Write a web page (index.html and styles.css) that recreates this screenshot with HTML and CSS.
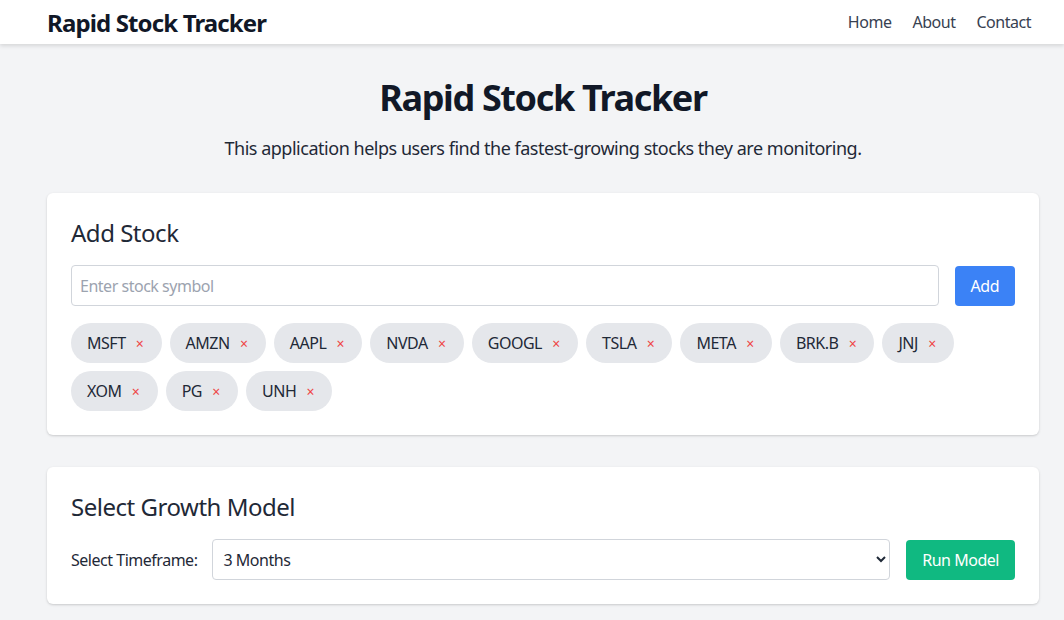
FILE: index.html
```html
<!DOCTYPE html>
<html lang="en">
<head>
<meta charset="utf-8">
<title>Rapid Stock Tracker</title>
<link rel="stylesheet" href="styles.css">
</head>
<body>
<header class="topbar">
  <div class="topbar-inner">
    <div class="brand">Rapid Stock Tracker</div>
    <nav class="nav">
      <a href="#">Home</a>
      <a href="#">About</a>
      <a href="#">Contact</a>
    </nav>
  </div>
</header>
<main class="main">
  <h1 class="title">Rapid Stock Tracker</h1>
  <p class="subtitle">This application helps users find the fastest-growing stocks they are monitoring.</p>

  <section class="card">
    <h2 class="card-title">Add Stock</h2>
    <div class="row">
      <input class="text-input" type="text" placeholder="Enter stock symbol">
      <button class="btn btn-blue">Add</button>
    </div>
    <div class="chips">
      <span class="chip">MSFT<span class="x">×</span></span>
      <span class="chip">AMZN<span class="x">×</span></span>
      <span class="chip">AAPL<span class="x">×</span></span>
      <span class="chip">NVDA<span class="x">×</span></span>
      <span class="chip">GOOGL<span class="x">×</span></span>
      <span class="chip">TSLA<span class="x">×</span></span>
      <span class="chip">META<span class="x">×</span></span>
      <span class="chip">BRK.B<span class="x">×</span></span>
      <span class="chip">JNJ<span class="x">×</span></span>
      <span class="chip">XOM<span class="x">×</span></span>
      <span class="chip">PG<span class="x">×</span></span>
      <span class="chip">UNH<span class="x">×</span></span>
    </div>
  </section>

  <section class="card">
    <h2 class="card-title">Select Growth Model</h2>
    <div class="row">
      <label class="label" for="tf">Select Timeframe:</label>
      <select class="select" id="tf">
        <option>3 Months</option>
        <option>6 Months</option>
        <option>1 Year</option>
      </select>
      <button class="btn btn-green">Run Model</button>
    </div>
  </section>
</main>
</body>
</html>
```
FILE: styles.css
```css
* { box-sizing: border-box; }
html, body { margin: 0; padding: 0; }
body {
  background: #f3f4f6;
  font-family: "Noto Sans", "Open Sans", sans-serif;
  letter-spacing: -0.03em;
  color: #111827;
  overflow: hidden;
}
.topbar {
  background: #fff;
  height: 44px;
  box-shadow: 0 2px 4px rgba(0,0,0,0.12);
  position: relative;
  z-index: 1;
}
.topbar-inner {
  height: 44px;
  padding: 0 33px 0 47px;
  display: flex;
  align-items: center;
  justify-content: space-between;
}
.brand {
  font-size: 24px;
  font-weight: 700;
  letter-spacing: -0.036em;
  color: #111827;
}
.nav { display: flex; gap: 21px; }
.nav a {
  color: #374151;
  text-decoration: none;
  font-size: 16px;
}
.main {
  padding: 34px 25px 0 47px;
}
.title {
  margin: 0;
  text-align: center;
  font-size: 36px;
  line-height: 40px;
  font-weight: 700;
  letter-spacing: -0.038em;
  color: #111827;
}
.subtitle {
  margin: 16px 0 31px;
  text-align: center;
  font-size: 18px;
  line-height: 28px;
  color: #1f2937;
}
.card {
  background: #fff;
  border-radius: 6px;
  box-shadow: 0 1px 3px rgba(0,0,0,0.12), 0 1px 2px rgba(0,0,0,0.06);
  padding: 24px;
  margin-bottom: 32px;
}
.card-title {
  margin: 0 0 16px;
  font-size: 24px;
  line-height: 32px;
  font-weight: 400;
  color: #1f2937;
}
.row {
  display: flex;
  align-items: center;
  gap: 16px;
}
.text-input {
  flex: 1;
  height: 41px;
  border: 1px solid #d1d5db;
  border-radius: 4px;
  padding: 0 8px;
  font: inherit;
  font-size: 16px;
  letter-spacing: -0.03em;
  color: #111827;
  outline: none;
}
.text-input::placeholder { color: #9ca3af; }
.btn {
  border: none;
  border-radius: 4px;
  height: 40px;
  padding: 0 16px;
  font: inherit;
  font-size: 16px;
  letter-spacing: -0.03em;
  color: #fff;
  cursor: pointer;
}
.btn-blue { background: #3b82f6; }
.btn-green { background: #10b981; }
.chips {
  margin-top: 17px;
  display: flex;
  flex-wrap: wrap;
  gap: 8px;
}
.chip {
  display: inline-flex;
  align-items: center;
  height: 40px;
  padding: 0 16px;
  border-radius: 9999px;
  background: #e5e7eb;
  font-size: 16px;
  color: #1f2937;
}
.chip .x {
  width: 12px;
  margin-left: 8px;
  text-align: center;
  color: #ef4444;
  font-size: 14px;
}
.label {
  font-size: 16px;
  color: #1f2937;
  white-space: nowrap;
}
.select {
  flex: 1;
  height: 41px;
  margin-left: -1px;
  border: 1px solid #d1d5db;
  border-radius: 4px;
  padding: 0 6px;
  background: #fff;
  font: inherit;
  font-size: 16px;
  letter-spacing: -0.03em;
  color: #1f2937;
}
```
